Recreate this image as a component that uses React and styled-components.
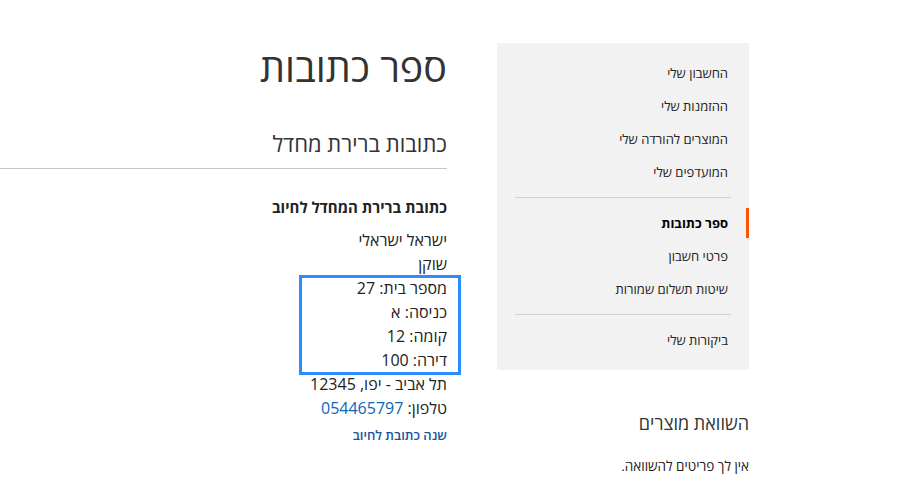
import React from "react";
import styled, { createGlobalStyle } from "styled-components";

const Global = createGlobalStyle`
  html, body { margin: 0; padding: 0; background: #fff; }
  body { font-family: "Open Sans", "Liberation Sans", sans-serif; color: #333; }
  * { box-sizing: border-box; }
`;

const Page = styled.div`
  direction: rtl;
  display: flex;
  align-items: flex-start;
  gap: 50px;
  padding: 43px 153px 0 0;
  width: 902px;
  height: 501px;
  overflow: hidden;
`;

const Side = styled.aside`
  width: 252px;
  flex: none;
  display: flex;
  flex-direction: column;
`;

const Nav = styled.nav`
  background: #f2f2f2;
  padding: 12px 0 15px;
`;

const NavList = styled.ul`
  list-style: none;
  margin: 0;
  padding: 0;
`;

const NavItem = styled.li`
  margin-top: 3px;
  font-size: 13px;
  line-height: 20px;
  padding: 5px 18px 5px 15px;
  border-right: 3px solid ${(p) => (p.$current ? "#ff5501" : "transparent")};
  font-weight: ${(p) => (p.$current ? 700 : 400)};
  color: ${(p) => (p.$current ? "#000" : "#222")};
`;

const Delim = styled.li`
  border-top: 1px solid #d1d1d1;
  margin: 10px 18px 10px 18px;
`;

const Compare = styled.div`
  margin-top: 41px;
`;

const CompareTitle = styled.div`
  font-size: 18px;
  font-weight: 400;
  line-height: 24px;
  color: #333;
`;

const CompareEmpty = styled.div`
  margin-top: 21px;
  font-size: 13.5px;
  line-height: 20px;
  color: #222;
`;

const Main = styled.main`
  width: 447px;
  flex: none;
`;

const Title = styled.h1`
  margin: 0;
  font-size: 39.5px;
  font-weight: 400;
  line-height: 48px;
  color: #333;
`;

const BlockTitle = styled.div`
  margin-top: 37px;
  font-size: 22px;
  font-weight: 400;
  line-height: 30px;
  padding-bottom: 10px;
  border-bottom: 1px solid #c6c6c6;
`;

const BoxTitle = styled.div`
  margin-top: 28px;
  font-size: 15px;
  font-weight: 700;
  line-height: 20px;
  color: #222;
`;

const Address = styled.address`
  font-style: normal;
  margin-top: 11px;
  font-size: 16px;
  line-height: 24px;
  color: #222;
`;

const Line = styled.div``;

const Group = styled.div`
  position: relative;
`;

const Frame = styled.div`
  position: absolute;
  top: -1px;
  bottom: -3px;
  right: -14px;
  width: 162px;
  border: 3px solid #2a8cff;
  pointer-events: none;
`;

const Link = styled.a`
  color: ${(p) => (p.$strong ? "#1a56a0" : "#0b66b4")};
  font-weight: ${(p) => (p.$strong ? 600 : 400)};
  text-decoration: none;
`;

const Actions = styled.div`
  margin-top: 5px;
  font-size: 13px;
  line-height: 20px;
`;

const items = [
  { label: "החשבון שלי" },
  { label: "ההזמנות שלי" },
  { label: "המוצרים להורדה שלי" },
  { label: "המועדפים שלי" },
  { delim: true },
  { label: "ספר כתובות", current: true },
  { label: "פרטי חשבון" },
  { label: "שיטות תשלום שמורות" },
  { delim: true },
  { label: "ביקורות שלי" },
];

export default function App() {
  return (
    <>
      <Global />
      <Page>
        <Side>
          <Nav>
            <NavList>
              {items.map((it, i) =>
                it.delim ? (
                  <Delim key={i} />
                ) : (
                  <NavItem key={i} $current={it.current}>
                    {it.label}
                  </NavItem>
                )
              )}
            </NavList>
          </Nav>
          <Compare>
            <CompareTitle>השוואת מוצרים</CompareTitle>
            <CompareEmpty>אין לך פריטים להשוואה.</CompareEmpty>
          </Compare>
        </Side>
        <Main>
          <Title>ספר כתובות</Title>
          <BlockTitle>כתובות ברירת מחדל</BlockTitle>
          <BoxTitle>כתובת ברירת המחדל לחיוב</BoxTitle>
          <Address>
            <Line>ישראל ישראלי</Line>
            <Line>שוקן</Line>
            <Group>
              <Line>מספר בית: 27</Line>
              <Line>כניסה: א</Line>
              <Line>קומה: 12</Line>
              <Line>דירה: 100</Line>
              <Frame />
            </Group>
            <Line>תל אביב - יפו, 12345</Line>
            <Line>
              טלפון: <Link href="#">054465797</Link>
            </Line>
          </Address>
          <Actions>
            <Link href="#" $strong>
              שנה כתובת לחיוב
            </Link>
          </Actions>
        </Main>
      </Page>
    </>
  );
}
